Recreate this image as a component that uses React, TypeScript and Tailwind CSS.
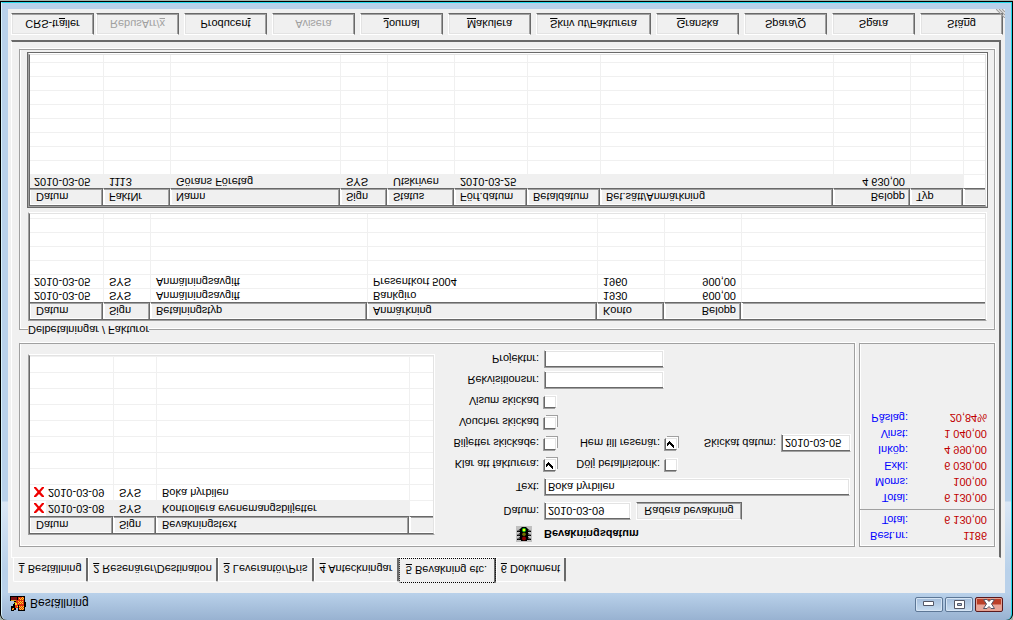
import React from 'react';

interface Column {
    title: string;
    width?: string;
    right?: boolean;
}

interface GridListProps {
    label: string;
    columns: Column[];
    rows: React.ReactNode[][];
    emptyRows: number;
    rowClass: string;
    spacerClass?: string;
    selected?: boolean;
}

const RAISED = 'border border-t-white border-l-white border-r-[#696969] border-b-[#696969] shadow-[inset_-1px_-1px_0_#a0a0a0,inset_1px_1px_0_#e3e3e3] bg-[#f0f0f0]';
const SUNKEN = 'border border-t-[#a0a0a0] border-l-[#a0a0a0] border-r-white border-b-white shadow-[inset_1px_1px_0_#696969,inset_-1px_-1px_0_#e3e3e3] bg-white';
const ETCHED = 'border border-[#a0a0a0] shadow-[1px_1px_0_#fff,inset_1px_1px_0_#fff]';

// "&" marks the keyboard shortcut letter
const Mnemonic: React.FC<{ text: string }> = ({ text }) => {
    const at = text.indexOf('&');
    if (at < 0) return <>{text}</>;
    return (
        <span className="whitespace-pre">
            {text.slice(0, at)}
            <u>{text[at + 1]}</u>
            {text.slice(at + 2)}
        </span>
    );
};

const GridList: React.FC<GridListProps> = ({ label, columns, rows, emptyRows, rowClass, spacerClass, selected }) => {
    const last = columns.length - 1;
    return (
        <div className="border border-t-[#a0a0a0] border-l-[#a0a0a0] border-r-white border-b-white">
            <div className="overflow-hidden border border-t-[#696969] border-l-[#696969] border-r-[#e3e3e3] border-b-[#e3e3e3] bg-white">
                <table aria-label={label} className="w-full table-fixed border-separate border-spacing-0">
                    <colgroup>
                        {columns.map((col, i) => <col key={i} className={col.width} />)}
                    </colgroup>
                    <thead>
                        <tr className="h-[17px]">
                            {columns.map((col, i) => (
                                <th
                                    key={i}
                                    className={`border-b border-b-[#696969] bg-[#f0f0f0] p-0 font-normal leading-4 whitespace-nowrap ${i === 0 ? 'pl-1.5' : 'pl-[5px]'} ${col.right ? 'pr-[5px] text-right' : 'text-left'} ${i === last ? 'shadow-[inset_1px_1px_0_#fff,inset_0_-1px_0_#a0a0a0]' : 'border-r border-r-white shadow-[inset_-1px_0_0_#696969,inset_-2px_-1px_0_#a0a0a0,inset_1px_1px_0_#fff]'}`}
                                >
                                    {col.title}
                                </th>
                            ))}
                        </tr>
                    </thead>
                    <tbody>
                        {rows.map((row, r) => (
                            <tr key={r} className={rowClass}>
                                {columns.map((col, i) => (
                                    <td
                                        key={i}
                                        className={`border-b border-[#f0f0f0] p-0 leading-[13px] whitespace-nowrap ${i === 0 ? 'pl-1' : 'pl-[5px]'} ${col.right ? 'pr-[5px] text-right' : ''} ${i < last ? 'border-r' : ''} ${selected && r === 0 && i < last ? 'bg-[#f0f0f0]' : ''}`}
                                    >
                                        {row[i]}
                                    </td>
                                ))}
                            </tr>
                        ))}
                        {Array.from({ length: emptyRows }, (_, r) => (
                            <tr key={`empty-${r}`} className={rowClass}>
                                {columns.map((_, i) => (
                                    <td key={i} className={`border-b border-[#f0f0f0] p-0 ${i < last ? 'border-r' : ''}`}></td>
                                ))}
                            </tr>
                        ))}
                        {spacerClass && (
                            <tr className={spacerClass}>
                                {columns.map((_, i) => (
                                    <td key={i} className={`border-[#f0f0f0] p-0 ${i < last ? 'border-r' : ''}`}></td>
                                ))}
                            </tr>
                        )}
                    </tbody>
                </table>
            </div>
        </div>
    );
};

const CheckBox: React.FC<{ id: string; checked?: boolean; framed?: boolean }> = ({ id, checked, framed }) => (
    <span className="relative h-3.5 w-3.5 shrink-0">
        <input
            id={id}
            type="checkbox"
            defaultChecked={checked}
            className={`peer block h-3 w-3 appearance-none border border-t-[#696969] border-l-[#696969] border-r-[#e3e3e3] border-b-[#e3e3e3] bg-white ${framed ? 'shadow-[1px_1px_0_#fff,2px_2px_0_#a0a0a0,-1px_-1px_0_#a0a0a0]' : 'shadow-[1px_1px_0_#fff,-1px_-1px_0_#a0a0a0]'}`}
        />
        <svg viewBox="0 0 12 12" className="pointer-events-none absolute top-0 left-0 hidden h-3 w-3 peer-checked:block">
            <path d="M2 4h1v1h1v1h1v-1h1v-1h1v-1h1v-1h1v3h-1v1h-1v1h-1v1h-1v1h-1v-1h-1v-1h-1z" fill="#000" />
        </svg>
    </span>
);

const FieldLabel: React.FC<{ htmlFor: string; className?: string; children: React.ReactNode }> = ({ htmlFor, className = 'w-[104px]', children }) => (
    <label htmlFor={htmlFor} className={`shrink-0 text-right whitespace-nowrap ${className}`}>{children}</label>
);

const CrossDate: React.FC<{ date: string }> = ({ date }) => (
    <span className="-ml-1 flex h-[15px] items-center">
        <span className="flex h-[15px] w-4 items-center bg-white pl-[3px]">
            <svg viewBox="0 0 12 12" className="h-3 w-3">
                <path d="M1 1l2 0 3 3 3-3 2 0v1L7.500 6 11 10v1H9L6 7.500 3 11H1v-1l3.500-4L1 2z" fill="#f00000" />
            </svg>
        </span>
        <span className="pl-0.5">{date}</span>
    </span>
);

const AppIcon = () => (
    <svg viewBox="0 0 16 16" className="h-4 w-4" shapeRendering="crispEdges">
        <path d="M1 1h3v1h2v2h2V1h7v4h1v5h-1v6H0v-5h4V8H3V6H1z" fill="#000" />
        <path d="M2 2h2v2H2zM5 4h3v3H5zM9 2h5v5H9zM6 7h8v5H6zM8 12h6v3H8z" fill="#e03010" />
        <path d="M2 2h1v1H2zM3 3h1v1H3zM9 3h1v1H9zM11 3h1v1h-1zM13 3h1v1h-1zM10 2h1v1h-1zM12 2h1v1h-1zM10 4h1v1h-1zM12 4h1v1h-1zM7 5h1v1H7zM9 5h1v1H9zM11 5h1v1h-1zM13 5h1v1h-1zM8 8h1v1H8zM10 8h1v1h-1zM12 8h1v1h-1zM9 9h1v1H9zM11 9h1v1h-1zM8 10h1v1H8zM10 10h1v1h-1zM12 10h1v1h-1zM9 13h1v1H9zM11 13h1v1h-1zM13 13h1v1h-1zM10 12h1v1h-1zM12 12h1v1h-1zM12 14h1v1h-1zM5 7h2v2H5z" fill="#ffd820" />
        <path d="M1 12h6v3H1z" fill="#801010" />
        <path d="M1 11h5v1H1zM4 9h2v1H4z" fill="#d8a020" />
    </svg>
);

const TrafficLight = () => (
    <svg viewBox="0 0 16 16" className="h-4 w-4">
        <path d="M0 0h16v16H0z" fill="#c0c0c0" />
        <path d="M5 1h6v1h4v1l-3 2v1h3v1l-3 2v1h3v1l-3 2-2 2H6l-2-2-3-2v-1h3V9L1 7V6h3V5L1 3V2h4z" fill="#000" />
        <path d="M2 3l2 1M14 3l-2 1M2 7l2 1M14 7l-2 1M2 11l2 1M14 11l-2 1" stroke="#c0c0c0" strokeWidth=".6" />
        <circle cx="8" cy="3.500" r="2" fill="#900000" />
        <circle cx="8" cy="7.800" r="1.800" fill="#707000" />
        <circle cx="8" cy="12" r="2" fill="#20e020" />
        <path d="M7 11h2v2H7z" fill="#ffff00" />
    </svg>
);

const tabs = [
    { text: '&1 Beställning', width: 'w-[75px]' },
    { text: '&2 Resenärer/Destination', width: 'w-[130px]' },
    { text: '&3 Leverantör/Pris', width: 'w-24' },
    { text: '&4 Anteckningar', width: 'w-[85px]' },
    { text: '&5 Bevakning etc.', width: 'w-[97px]', active: true },
    { text: '&6 Dokument', width: 'w-[70px]' },
];

const actions = [
    { text: 'CRS-tr&ailer' },
    { text: 'RebusArr/&x', disabled: true },
    { text: 'Producen&t' },
    { text: 'Avisera', disabled: true },
    { text: '&Journal' },
    { text: '&Makulera' },
    { text: '&Skriv ut/Fakturera', wide: true },
    { text: '&Granska' },
    { text: 'Spara/&Q' },
    { text: 'S&para' },
    { text: 'Stä&ng' },
];

const reminderColumns: Column[] = [
    { title: 'Datum', width: 'w-[84px]' },
    { title: 'Sign', width: 'w-[43px]' },
    { title: 'Bevakningstext' },
    { title: '', width: 'w-[23px]' },
];

const paymentColumns: Column[] = [
    { title: 'Datum', width: 'w-[74px]' },
    { title: 'Sign', width: 'w-[47px]' },
    { title: 'Betalningstyp', width: 'w-[217px]' },
    { title: 'Anmärkning', width: 'w-[230px]' },
    { title: 'Konto', width: 'w-[67px]' },
    { title: 'Belopp', width: 'w-[77px]', right: true },
    { title: '' },
];

const invoiceColumns: Column[] = [
    { title: 'Datum', width: 'w-[74px]' },
    { title: 'FaktNr', width: 'w-[67px]' },
    { title: 'Namn', width: 'w-[170px]' },
    { title: 'Sign', width: 'w-[47px]' },
    { title: 'Status', width: 'w-[67px]' },
    { title: 'Förf.datum', width: 'w-[73px]' },
    { title: 'Betaldatum', width: 'w-[73px]' },
    { title: 'Bet.sätt/Anmärkning' },
    { title: 'Belopp', width: 'w-[77px]', right: true },
    { title: 'Typ', width: 'w-[53px]' },
    { title: '', width: 'w-[21px]' },
];

const orderTotals = [
    ['Best.nr:', '1186'],
    ['Total:', '6 130,00'],
];

const marginTotals = [
    ['Total:', '6 130,00'],
    ['Moms:', '100,00'],
    ['Exkl:', '6 030,00'],
    ['Inköp:', '4 990,00'],
    ['Vinst:', '1 040,00'],
    ['Påslag:', '20,84%'],
];

const Totals: React.FC<{ items: string[][] }> = ({ items }) => (
    <dl>
        {items.map(([name, value]) => (
            <div key={name} className="flex h-4 items-center justify-between pr-[7px]">
                <dt className="w-12 text-right text-[#0000ff]">{name}</dt>
                <dd className="text-[#c00000]">{value}</dd>
            </div>
        ))}
    </dl>
);

const TitleBar = () => (
    <div className="flex h-[27px] items-start pt-2 pr-0.5 pl-0.5">
        <AppIcon />
        <h1 className="ml-1 flex-1 text-[12px] leading-[18px]">Beställning</h1>
        <div className="flex gap-0.5">
            <button aria-label="Minimera" className="flex h-[15px] w-7 items-center justify-center rounded-xs border border-[#5d7796] bg-linear-to-b from-[#c8dcf0] to-[#a3bddb] shadow-[inset_0_0_0_1px_#d5e4f4]">
                <svg viewBox="0 0 12 6" className="h-1.5 w-3"><path d="M.5 1.500h10v4H.5z" fill="#fff" stroke="#535666" /></svg>
            </button>
            <button aria-label="Maximera" className="flex h-[15px] w-7 items-center justify-center rounded-xs border border-[#5d7796] bg-linear-to-b from-[#c8dcf0] to-[#a3bddb] shadow-[inset_0_0_0_1px_#d5e4f4]">
                <svg viewBox="0 0 11 9" className="h-[9px] w-[11px]"><path d="M.5.500h10v8H.5z" fill="#fff" stroke="#535666" /><path d="M3.500 3.500h4v2h-4z" fill="#a9c0dc" stroke="#535666" /></svg>
            </button>
            <button aria-label="Stäng fönster" className="flex h-[15px] w-7 items-center justify-center rounded-xs border border-[#5a1a1e] bg-linear-to-b from-[#e8a598] from-45% to-[#bb3f28] to-55% shadow-[inset_0_0_0_1px_#e5a090]">
                <svg viewBox="0 0 12 10" className="h-2.5 w-3"><path d="M.5.500h3.500l2 2 2-2h3.500L8.500 5l3 4.500H8l-2-2-2 2H.5l3-4.500z" fill="#fff" stroke="#535666" /></svg>
            </button>
        </div>
    </div>
);

const ReminderForm = () => (
    <form className="flex min-w-0 flex-1 flex-col pr-1">
        <div className="flex h-[23px] items-center">
            <span className="flex w-[104px] justify-end pr-[7px]"><TrafficLight /></span>
            <h2 className="pl-[5px] text-[11px] font-bold">Bevakningsdatum</h2>
        </div>
        <div className="flex h-6 items-center gap-[5px]">
            <FieldLabel htmlFor="datum">Datum:</FieldLabel>
            <input id="datum" defaultValue="2010-03-09" className={`h-[18px] w-[87px] px-[3px] ${SUNKEN}`} />
            <button type="button" className={`h-[18px] w-[106px] leading-4 ${RAISED}`}>Radera bevakning</button>
        </div>
        <div className="flex h-6 items-center gap-[5px]">
            <FieldLabel htmlFor="text">Text:</FieldLabel>
            <input id="text" defaultValue="Boka hyrbilen" className={`h-[18px] min-w-0 flex-1 px-[3px] ${SUNKEN}`} />
        </div>
        <div>
            <div className="flex h-[21px] items-center gap-[5px]">
                <FieldLabel htmlFor="klar">Klar att fakturera:</FieldLabel>
                <CheckBox id="klar" checked framed />
                <FieldLabel htmlFor="dolj" className="w-[97px]">Dölj betalhistorik:</FieldLabel>
                <CheckBox id="dolj" />
            </div>
            <div className="flex h-[21px] items-center gap-[5px]">
                <FieldLabel htmlFor="biljetter">Biljetter skickade:</FieldLabel>
                <CheckBox id="biljetter" framed />
                <FieldLabel htmlFor="hem" className="w-[97px]">Hem till resenär:</FieldLabel>
                <CheckBox id="hem" checked framed />
                <FieldLabel htmlFor="skickat" className="w-[92px]">Skickat datum:</FieldLabel>
                <input id="skickat" defaultValue="2010-03-05" className={`h-[18px] w-[70px] px-[3px] ${SUNKEN}`} />
            </div>
            <div className="flex h-[21px] items-center gap-[5px]">
                <FieldLabel htmlFor="voucher">Voucher skickad</FieldLabel>
                <CheckBox id="voucher" framed />
            </div>
            <div className="flex h-[21px] items-center gap-[5px]">
                <FieldLabel htmlFor="visum">Visum skickad</FieldLabel>
                <CheckBox id="visum" />
            </div>
            <div className="flex h-[21px] items-center gap-[5px]">
                <FieldLabel htmlFor="rekvisition">Rekvisitionsnr:</FieldLabel>
                <input id="rekvisition" className={`h-[18px] w-[120px] px-[3px] ${SUNKEN}`} />
            </div>
            <div className="flex h-[21px] items-center gap-[5px]">
                <FieldLabel htmlFor="projekt">Projektnr:</FieldLabel>
                <input id="projekt" className={`h-[18px] w-[120px] px-[3px] ${SUNKEN}`} />
            </div>
        </div>
    </form>
);

const App: React.FC = () => {
    return (
        // The whole window is mirrored top to bottom
        <div className="flex min-h-screen -scale-y-100 flex-col border-b border-[#a5b5ad] bg-[#a5b5ad] font-['Liberation_Sans',Arial,sans-serif] text-[11px] leading-[14px] text-black">
            <div className="flex flex-1 flex-col rounded-t-md border-x border-b border-black bg-black">
                <div className="flex flex-1 flex-col rounded-t-md border-x border-b border-l-[#d8f2fb] border-r-[#20d8e8] border-b-[#20d8e8] bg-[linear-gradient(to_bottom,#98b2d1_0px,#b9d1ea_27px,#b9d1ea_50px,#dbe7f5_118px,#b9d1ea_119px)] px-1.5 pb-1.5">
                    <TitleBar />
                    <main className="relative flex flex-1 flex-col bg-[#f0f0f0] pt-2.5 pb-1">
                        <div role="tablist" className="flex items-end pl-[5px]">
                            {tabs.map((tab) => (
                                <button
                                    key={tab.text}
                                    role="tab"
                                    aria-selected={!!tab.active}
                                    className={`${tab.width} shrink-0 rounded-t-xs text-center whitespace-nowrap ${tab.active ? 'h-[25px] border-r-2 border-[#696969] outline-1 -outline-offset-1 outline-black outline-dotted' : 'h-6 border-t border-r-2 border-l border-t-white border-r-[#696969] border-l-white'}`}
                                >
                                    <Mnemonic text={tab.text} />
                                </button>
                            ))}
                        </div>

                        <div className="mr-1 ml-[3px] flex-1 border-t border-r-2 border-b-2 border-l border-t-white border-r-[#696969] border-b-[#696969] border-l-white pt-2.5 pr-1 pb-[7px] pl-[7px]">
                            <div className="flex gap-1">
                                <section className={`flex h-[204px] min-w-0 flex-1 pl-2 ${ETCHED}`}>
                                    <div className="w-[407px] shrink-0 pt-[11px]">
                                        <GridList
                                            label="Bevakningar"
                                            columns={reminderColumns}
                                            rows={[
                                                [<CrossDate date="2010-03-08" />, 'SYS', 'Kontrollera evenemangsbiljetter'],
                                                [<CrossDate date="2010-03-09" />, 'SYS', 'Boka hyrbilen'],
                                            ]}
                                            emptyRows={8}
                                            rowClass="h-4"
                                            selected
                                        />
                                    </div>
                                    <ReminderForm />
                                </section>
                                <aside className={`w-[136px] shrink-0 pt-0.5 ${ETCHED}`}>
                                    <Totals items={orderTotals} />
                                    <div className="mt-0.5 mb-[3px] border-t border-[#a0a0a0]"></div>
                                    <Totals items={marginTotals} />
                                </aside>
                            </div>

                            <fieldset className={`mt-1.5 min-w-0 pt-0.5 pr-[7px] pb-0.5 pl-2 ${ETCHED}`}>
                                <legend className="bg-[#f0f0f0]">Delbetalningar / Fakturor</legend>
                                <GridList
                                    label="Delbetalningar"
                                    columns={paymentColumns}
                                    rows={[
                                        ['2010-03-05', 'SYS', 'Anmälningsavgift', 'Bankgiro', '1930', '600,00'],
                                        ['2010-03-05', 'SYS', 'Anmälningsavgift', 'Presentkort 5004', '1960', '900,00'],
                                    ]}
                                    emptyRows={4}
                                    rowClass="h-3.5"
                                    spacerClass="h-1"
                                />
                                <div className="-mx-px mt-1 border border-[#696969]">
                                    <GridList
                                        label="Fakturor"
                                        columns={invoiceColumns}
                                        rows={[
                                            ['2010-03-05', '1113', 'Görans Företag', 'SYS', 'Utskriven', '2010-03-25', '', '', '4 630,00'],
                                        ]}
                                        emptyRows={8}
                                        rowClass="h-3.5"
                                        spacerClass="h-[7px]"
                                        selected
                                    />
                                </div>
                            </fieldset>
                        </div>

                        <div className="mt-[5px] flex gap-[5px] pr-0.5 pl-[3px]">
                            {actions.map((action, i) => (
                                <button
                                    key={action.text}
                                    disabled={action.disabled}
                                    className={`h-[22px] ${action.wide ? 'w-[115px] shrink-0' : 'flex-1'} ${i === 1 ? '-ml-[3px]' : ''} ${action.disabled ? 'text-[#a0a0a0]' : ''} ${RAISED}`}
                                >
                                    <Mnemonic text={action.text} />
                                </button>
                            ))}
                        </div>
                        <svg viewBox="0 0 9 9" className="absolute right-0 bottom-0 h-[9px] w-[9px]">
                            <path d="M0 9L9 0M3 9l6-6M6 9l3-3" stroke="#a0a0a0" strokeWidth="1.200" />
                        </svg>
                    </main>
                </div>
            </div>
        </div>
    );
};

export default App;
